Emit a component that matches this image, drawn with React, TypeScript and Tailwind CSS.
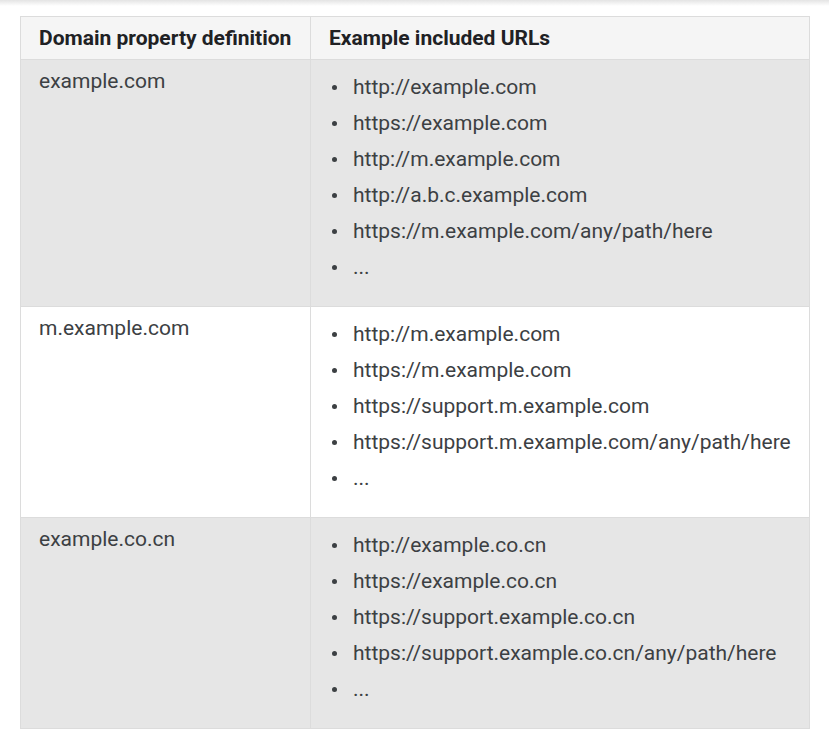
import React from "react";

const rows: { domain: string; urls: string[]; bg: string }[] = [
  {
    domain: "example.com",
    urls: [
      "http://example.com",
      "https://example.com",
      "http://m.example.com",
      "http://a.b.c.example.com",
      "https://m.example.com/any/path/here",
      "...",
    ],
    bg: "bg-[#e6e6e6]",
  },
  {
    domain: "m.example.com",
    urls: [
      "http://m.example.com",
      "https://m.example.com",
      "https://support.m.example.com",
      "https://support.m.example.com/any/path/here",
      "...",
    ],
    bg: "bg-white",
  },
  {
    domain: "example.co.cn",
    urls: [
      "http://example.co.cn",
      "https://example.co.cn",
      "https://support.example.co.cn",
      "https://support.example.co.cn/any/path/here",
      "...",
    ],
    bg: "bg-[#e6e6e6]",
  },
];

export default function App() {
  return (
    <div
      className="relative min-h-[745px] bg-white pt-[16px] pl-[20px]"
      style={{ fontFamily: "Roboto, 'Noto Sans', sans-serif" }}
    >
      <div className="absolute left-0 right-0 top-0 h-[6px] bg-gradient-to-b from-[#e4e4e4] to-white" />
      <div className="w-[790px] border border-[#dcdcdc]">
        <div className="grid grid-cols-[289px_1fr] bg-[#f5f5f5] border-b border-[#dcdcdc]">
          <div className="pl-[18px] py-[9px] text-[21px] leading-[24px] font-bold text-[#202124]">
            Domain property definition
          </div>
          <div className="border-l border-[#dcdcdc] pl-[18px] py-[9px] text-[21px] leading-[24px] font-bold text-[#202124]">
            Example included URLs
          </div>
        </div>
        {rows.map((r, i) => (
          <div
            key={r.domain}
            className={`grid grid-cols-[289px_1fr] ${r.bg} ${
              i < rows.length - 1 ? "border-b border-[#dcdcdc]" : ""
            }`}
          >
            <div className="pl-[18px] pt-[9px] text-[21px] leading-[24px] text-[#3c4043]">
              {r.domain}
            </div>
            <div className="border-l border-[#dcdcdc] pl-[21px] pt-[9px] pb-[21px]">
              <ul>
                {r.urls.map((u, j) => (
                  <li
                    key={j}
                    className="flex items-center text-[21px] leading-[36px] text-[#3c4043]"
                  >
                    <span className="mr-[16px] inline-block h-[5px] w-[5px] shrink-0 rounded-full bg-[#3c4043]" />
                    <span>{u}</span>
                  </li>
                ))}
              </ul>
            </div>
          </div>
        ))}
      </div>
    </div>
  );
}
